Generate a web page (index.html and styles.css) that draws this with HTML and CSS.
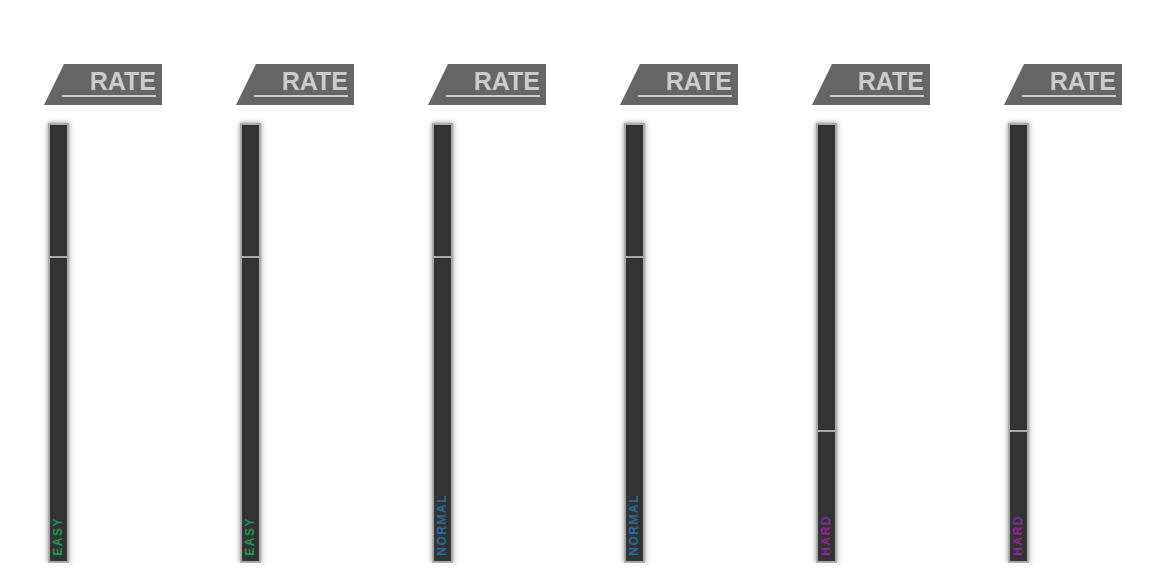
FILE: index.html
```html
<!DOCTYPE html>
<html lang="en">
<head>
    <meta charset="UTF-8">
    <meta name="viewport" content="width=device-width, initial-scale=1.0">
    <title>Rate Sliders</title>
    <link rel="stylesheet" href="styles.css">
</head>
<body>
    <div class="rates">
        <div class="rate-col">
            <div class="rate-label"><span>RATE</span></div>
            <div class="slider">
                <div class="thumb" style="top: 30%;"></div>
                <span class="level easy">EASY</span>
            </div>
        </div>
        <div class="rate-col">
            <div class="rate-label"><span>RATE</span></div>
            <div class="slider">
                <div class="thumb" style="top: 30%;"></div>
                <span class="level easy">EASY</span>
            </div>
        </div>
        <div class="rate-col">
            <div class="rate-label"><span>RATE</span></div>
            <div class="slider">
                <div class="thumb" style="top: 30%;"></div>
                <span class="level normal">NORMAL</span>
            </div>
        </div>
        <div class="rate-col">
            <div class="rate-label"><span>RATE</span></div>
            <div class="slider">
                <div class="thumb" style="top: 30%;"></div>
                <span class="level normal">NORMAL</span>
            </div>
        </div>
        <div class="rate-col">
            <div class="rate-label"><span>RATE</span></div>
            <div class="slider">
                <div class="thumb" style="top: 70%;"></div>
                <span class="level hard">HARD</span>
            </div>
        </div>
        <div class="rate-col">
            <div class="rate-label"><span>RATE</span></div>
            <div class="slider">
                <div class="thumb" style="top: 70%;"></div>
                <span class="level hard">HARD</span>
            </div>
        </div>
    </div>
</body>
</html>
```

FILE: styles.css
```css
body {
    margin: 0;
    background-color: #ffffff;
    font-family: "Liberation Sans", Arial, sans-serif;
}
.rates {
    display: flex;
}
.rate-col {
    width: 192px;
    padding: 64px 0 0 44px;
    box-sizing: border-box;
}
.rate-label {
    width: 118px;
    height: 41px;
    background-color: #666666;
    clip-path: polygon(20px 0, 100% 0, 100% 100%, 0 100%);
    padding: 4px 6px 0 18px;
    box-sizing: border-box;
}
.rate-label span {
    display: block;
    text-align: right;
    color: #cccccc;
    font-size: 25px;
    font-weight: bold;
    line-height: 27px;
    padding-right: 0;
    border-bottom: 2px solid #cccccc;
}
.slider {
    position: relative;
    margin: 18px 0 0 4px;
    width: 17px;
    height: 431px;
    background-color: #333333;
    border: 2px solid #aaaaaa;
    box-shadow: 0 0 5px rgba(0, 0, 0, 0.45);
    display: flex;
    flex-direction: column;
    justify-content: flex-end;
    align-items: center;
    padding-bottom: 5px;
    box-sizing: content-box;
}
.thumb {
    position: absolute;
    left: 0;
    right: 0;
    height: 2px;
    background-color: #aaaaaa;
}
.level {
    writing-mode: vertical-rl;
    transform: rotate(180deg);
    font-size: 12px;
    font-weight: bold;
    letter-spacing: 1.5px;
    line-height: 13px;
}
.easy {
    color: #1f9a4f;
}
.normal {
    color: #2b6e9e;
}
.hard {
    color: #8e2a9c;
}
```
